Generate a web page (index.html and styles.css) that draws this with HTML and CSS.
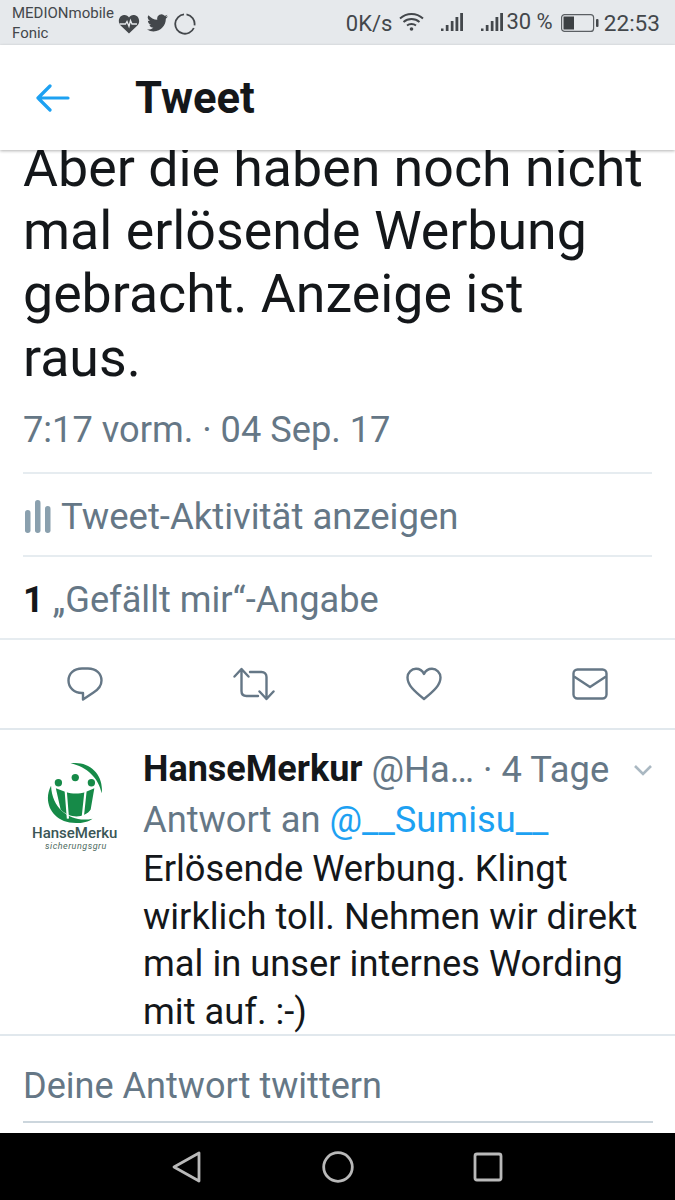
FILE: index.html
```html
<!DOCTYPE html>
<html lang="de">
<head>
  <meta charset="UTF-8" />
  <title>Tweet</title>
  <link rel="stylesheet" href="styles.css">
</head>
<body>
  <div class="screen">
    <div class="status">
      <div class="carrier">MEDIONmobile<br>Fonic</div>
      <svg class="st-heart" width="22" height="20" viewBox="0 0 22 20"><path fill="#43474b" d="M11 19.500 2.600 11.600C-.6 8.400.6 1.600 6 1c2.300-.2 4 .9 5 2.400C12 1.900 13.700.8 16 1c5.400.6 6.600 7.400 3.400 10.600z"/><path fill="none" stroke="#e6e9ec" stroke-width="1.300" d="M1.500 10h6l1.500-2.500 2 5 1.500-6 1.500 3.500h5"/></svg>
      <svg class="st-bird" width="21" height="18" viewBox="0 0 24 20"><path fill="#43474b" d="M24 2.400a9.800 9.800 0 0 1-2.800.8A4.900 4.900 0 0 0 23.300.5a9.800 9.800 0 0 1-3.100 1.200A4.900 4.900 0 0 0 11.800 6.200 14 14 0 0 1 1.700 1 4.900 4.900 0 0 0 3.200 7.600 4.900 4.900 0 0 1 1 7a4.900 4.900 0 0 0 3.900 4.800 4.900 4.900 0 0 1-2.200.1 4.900 4.900 0 0 0 4.600 3.400A9.900 9.900 0 0 1 0 17.400 14 14 0 0 0 7.500 19.600c9.100 0 14.300-7.700 14-14.600A10 10 0 0 0 24 2.400z"/></svg>
      <svg class="st-ring" width="22" height="22" viewBox="0 0 22 22"><path fill="none" stroke="#43474b" stroke-width="1.800" d="M10 1.400A9.700 9.700 0 1 0 19.800 15M12.500 1.400a9.700 9.700 0 0 1 8 11"/></svg>
      <div class="st-right">
        <span class="st-speed">0K/s</span>
        <svg class="st-wifi" width="25" height="19" viewBox="0 0 25 19"><g fill="none" stroke="#43474b" stroke-width="1.900"><path d="M1 6.500c6.500-6 16.500-6 23 0"/><path d="M4.500 10c4.500-4 11.500-4 16 0"/><path d="M8 13.500c2.500-2 6.500-2 9 0"/></g><circle cx="12.500" cy="17" r="1.800" fill="#43474b"/></svg>
        <svg class="st-signal" width="22" height="20" viewBox="0 0 22 20"><path fill="#43474b" d="M0 16.500h2.500V19H0zM4.800 13h2.700v6H4.800zM9.800 9h2.700v10H9.800zM14.500 5h2.800v14h-2.800zM19.200 1H22v18h-2.800z"/></svg>
        <svg class="st-signal2" width="22" height="20" viewBox="0 0 22 20"><path fill="#43474b" d="M0 16.500h2.500V19H0zM4.800 13h2.700v6H4.800zM9.800 9h2.700v10H9.800zM14.500 5h2.800v14h-2.800zM19.200 1H22v18h-2.800z"/></svg>
        <span class="st-pct">30 %</span>
        <svg class="st-batt" width="38" height="18" viewBox="0 0 38 18"><rect x=".6" y=".6" width="32" height="16.800" rx="3" fill="none" stroke="#5b5f63" stroke-width="1.200"/><rect x="2.500" y="2.500" width="10.500" height="13" fill="#3c4043"/><rect x="35" y="5" width="2.500" height="8" rx="1" fill="#43474b"/></svg>
        <span class="st-time">22:53</span>
      </div>
    </div>

    <div class="topbar">
      <svg class="back" width="34" height="28" viewBox="0 0 34 28"><path fill="none" stroke="#1da1f2" stroke-width="3.200" stroke-linecap="round" stroke-linejoin="round" d="M2 14h30M14 2 2 14l12 12"/></svg>
      <h1>Tweet</h1>
    </div>

    <div class="main">
      <p class="tweet-text">Aber die haben noch nicht mal erlösende Werbung gebracht. Anzeige ist raus.</p>
      <div class="tweet-date">7:17 vorm. · 04 Sep. 17</div>
      <div class="row row-first">
        <svg class="bars" width="26" height="33" viewBox="0 0 26 33"><g fill="#8aa0ae"><rect y="10" width="5.500" height="23" rx="2.700"/><rect x="10" width="5.500" height="33" rx="2.700"/><rect x="20" y="6" width="5.500" height="27" rx="2.700"/></g></svg>
        <span>Tweet-Aktivität anzeigen</span>
      </div>
      <div class="row row-likes"><b>1</b> <span>„Gefällt mir“-Angabe</span></div>
      <div class="actions">
        <svg width="36" height="36" viewBox="0 0 36 36"><path fill="none" stroke="#657786" stroke-width="2.400" stroke-linejoin="round" d="M15 2.500h6c8 0 13.500 5 13.500 12 0 5.500-4 9.500-8 12L16 33.500v-6.500h-1C7 27 1.500 21.500 1.500 14.500 1.500 7.500 7 2.500 15 2.500z"/></svg>
        <svg width="42" height="34" viewBox="0 0 42 34"><g fill="none" stroke="#657786" stroke-width="2.400" stroke-linecap="round" stroke-linejoin="round"><path d="M1.500 9.500 8.500 2l7 7.500M8.500 3v21c0 3 2 5 5 5H25"/><path d="M40.500 24.500 33.500 32l-7-7.500M33.500 31V10c0-3-2-5-5-5H17"/></g></svg>
        <svg width="36" height="34" viewBox="0 0 36 34"><path fill="none" stroke="#657786" stroke-width="2.400" stroke-linejoin="round" d="M18 32C8 24 1.500 18 1.500 10.500 1.500 5.500 5.500 1.800 10 1.800c3.500 0 6.500 2 8 5.200 1.500-3.200 4.500-5.200 8-5.200 4.500 0 8.500 3.700 8.500 8.700C34.500 18 28 24 18 32z"/></svg>
        <svg width="36" height="32" viewBox="0 0 36 32"><g fill="none" stroke="#657786" stroke-width="2.400" stroke-linejoin="round"><rect x="1.500" y="1.500" width="33" height="29" rx="4"/><path d="M2 8.500 18 19 34 8.500"/></g></svg>
      </div>
      <div class="reply">
        <div class="logo">
          <svg width="66" height="66" viewBox="90 35 180 180">
            <g fill="#168a48">
              <path d="M112 105C88 150 115 207 180 207c18 0 35-4 45-12-55 12-110-22-113-90z"/>
              <path d="M165 44c50-8 92 30 85 82-8-42-40-72-85-82z"/>
              <circle cx="132" cy="97" r="10"/>
              <circle cx="178" cy="83" r="10"/>
              <circle cx="222" cy="97" r="10"/>
              <path d="M125 112l27 10c18 6 36 6 54 0l24-10-10 58c-14 22-55 28-82 0z"/>
            </g>
            <path fill="none" stroke="#fff" stroke-width="6" d="M152 120l6 75M206 120l-8 75"/>
          </svg>
          <div class="logo-name">HanseMerku</div>
          <div class="logo-sub">sicherungsgru</div>
        </div>
        <div class="reply-body">
          <div class="reply-head"><b>HanseMerkur</b><span class="handle">@Ha…</span><span class="age">· 4 Tage</span>
            <svg class="chev" width="20" height="12" viewBox="0 0 20 12"><path fill="none" stroke="#aab8c2" stroke-width="2.600" d="M2 2l8 8 8-8"/></svg>
          </div>
          <div class="reply-to">Antwort an <a>@__Sumisu__</a></div>
          <div class="reply-text">Erlösende Werbung. Klingt wirklich toll. Nehmen wir direkt mal in unser internes Wording mit auf. :-)</div>
        </div>
      </div>
    </div>

    <div class="compose"><div class="compose-inner">Deine Antwort twittern</div></div>

    <div class="navbar">
      <svg width="30" height="32" viewBox="0 0 30 32"><path fill="none" stroke="#b9b9b9" stroke-width="2.800" stroke-linejoin="round" d="M27 2v28L2 16z"/></svg>
      <svg width="32" height="32" viewBox="0 0 32 32"><circle cx="16" cy="16" r="14.300" fill="none" stroke="#b9b9b9" stroke-width="2.800"/></svg>
      <svg width="30" height="30" viewBox="0 0 30 30"><rect x="2" y="2" width="26" height="26" rx="2" fill="none" stroke="#b9b9b9" stroke-width="2.800"/></svg>
    </div>
  </div>
</body>
</html>
```

FILE: styles.css
```css
html, body { margin: 0; padding: 0; }
body {
  font-family: Roboto, "Liberation Sans", sans-serif;
  background: #fff;
}
.screen {
  width: 675px;
  height: 1200px;
  display: flex;
  flex-direction: column;
  overflow: hidden;
}

/* status bar */
.status {
  height: 45px;
  flex: none;
  background: #e6e9ec;
  color: #43474b;
  display: flex;
  align-items: center;
  padding: 0 15px 0 12px;
  box-sizing: border-box;
}
.carrier { font-size: 15px; line-height: 20px; width: 105px; }
.st-heart { margin-left: 1px; margin-top: 2px; }
.st-bird { margin-left: 7px; }
.st-ring { margin-left: 6px; margin-top: 2px; }
.st-right { margin-left: auto; display: flex; align-items: center; }
.st-speed { font-size: 22px; margin-top: 2px; }
.st-wifi { margin-left: 7px; margin-top: -2px; }
.st-signal { margin-left: 17px; margin-top: -2px; }
.st-signal2 { margin-left: 18px; margin-top: -2px; }
.st-pct { font-size: 22px; margin-left: 3px; margin-top: -2px; }
.st-batt { margin-left: 8px; }
.st-time { font-size: 22.6px; margin-left: 5px; margin-top: 2px; }

/* header */
.topbar {
  height: 105px;
  flex: none;
  background: #fff;
  display: flex;
  align-items: center;
  position: relative;
  z-index: 2;
  box-shadow: 0 1px 3px rgba(0,0,0,0.3);
}
.back { margin-left: 36px; }
.topbar h1 {
  margin: 2px 0 0 65px;
  font-size: 43.6px;
  font-weight: 700;
  color: #14171a;
}

.main {
  flex: 1;
  min-height: 0;
  overflow: hidden;
  padding: 0 23px;
}
.tweet-text {
  margin: -14px 0 0;
  font-size: 53.7px;
  line-height: 63.200px;
  color: #14171a;
}
.tweet-date {
  margin-top: 16px;
  font-size: 36.2px;
  line-height: 50px;
  color: #657786;
}
.row {
  height: 83px;
  box-sizing: border-box;
  border-top: 2px solid #e6ecf0;
  padding-top: 4px;
  display: flex;
  align-items: center;
  gap: 10px;
  font-size: 36.5px;
  color: #657786;
}
.row-first { margin-top: 17px; }
.row-likes { font-size: 36.2px; gap: 9px; }
.row b { color: #14171a; font-weight: 700; }
.bars { margin-left: 2px; }
.actions {
  border-top: 2px solid #e6ecf0;
  height: 90px;
  box-sizing: border-box;
  margin: 0 -23px;
  padding: 0 67px;
  display: flex;
  justify-content: space-between;
  align-items: center;
}
.reply {
  border-top: 2px solid #e1e8ed;
  margin: 0 -23px;
  padding: 16px 22px 0 23px;
  display: flex;
}
.logo { width: 120px; flex: none; padding-top: 14px; }
.logo svg { display: block; margin-left: 20px; }
.logo-name {
  font-size: 15px;
  line-height: 15px;
  font-weight: 500;
  color: #3a5656;
  margin-left: 9px;
  white-space: nowrap;
}
.logo-sub {
  font-size: 9px;
  line-height: 10px;
  font-style: italic;
  color: #4d6a60;
  margin-left: 22px;
  white-space: nowrap;
  letter-spacing: .5px;
}
.reply-body { flex: 1; font-size: 36.3px; line-height: 47.600px; color: #14171a; }
.reply-head { display: flex; align-items: center; white-space: nowrap; gap: 9px; }
.reply-head b { font-weight: 700; font-size: 36px; }
.handle, .age { color: #657786; }
.chev { margin-left: auto; }
.reply-to { color: #657786; margin: 3px 0 1px; }
.reply-to a { color: #1da1f2; }

/* reply box */
.compose {
  height: 99px;
  flex: none;
  box-sizing: border-box;
  background: #fff;
  border-top: 2px solid #e1e8ed;
  padding: 0 22px 0 23px;
}
.compose-inner {
  height: 87px;
  box-sizing: border-box;
  border-bottom: 2px solid #ccd6dd;
  padding-top: 14px;
  font-size: 36.1px;
  color: #657786;
  display: flex;
  align-items: center;
}

.navbar {
  height: 67px;
  flex: none;
  background: #000;
  display: flex;
  justify-content: space-between;
  align-items: center;
  padding: 0 172px;
}
```
